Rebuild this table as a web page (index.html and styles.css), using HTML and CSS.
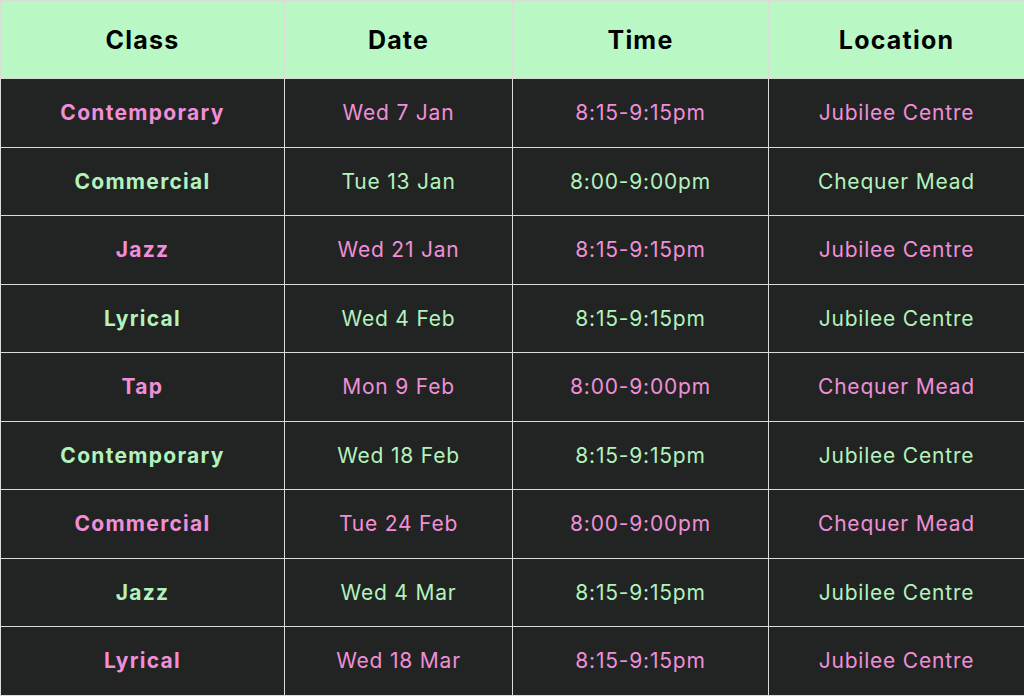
FILE: index.html
```html
<!DOCTYPE html>
<html>
<head>
<meta charset="utf-8">
<link rel="stylesheet" href="styles.css">
</head>
<body>
<table class="schedule">
  <colgroup>
    <col class="c1"><col class="c2"><col class="c3"><col class="c4">
  </colgroup>
  <thead>
    <tr><th>Class</th><th>Date</th><th>Time</th><th>Location</th></tr>
  </thead>
  <tbody>
    <tr class="pink"><td class="cls">Contemporary</td><td>Wed 7 Jan</td><td>8:15-9:15pm</td><td>Jubilee Centre</td></tr>
    <tr class="green"><td class="cls">Commercial</td><td>Tue 13 Jan</td><td>8:00-9:00pm</td><td>Chequer Mead</td></tr>
    <tr class="pink"><td class="cls">Jazz</td><td>Wed 21 Jan</td><td>8:15-9:15pm</td><td>Jubilee Centre</td></tr>
    <tr class="green"><td class="cls">Lyrical</td><td>Wed 4 Feb</td><td>8:15-9:15pm</td><td>Jubilee Centre</td></tr>
    <tr class="pink"><td class="cls">Tap</td><td>Mon 9 Feb</td><td>8:00-9:00pm</td><td>Chequer Mead</td></tr>
    <tr class="green"><td class="cls">Contemporary</td><td>Wed 18 Feb</td><td>8:15-9:15pm</td><td>Jubilee Centre</td></tr>
    <tr class="pink"><td class="cls">Commercial</td><td>Tue 24 Feb</td><td>8:00-9:00pm</td><td>Chequer Mead</td></tr>
    <tr class="green"><td class="cls">Jazz</td><td>Wed 4 Mar</td><td>8:15-9:15pm</td><td>Jubilee Centre</td></tr>
    <tr class="pink"><td class="cls">Lyrical</td><td>Wed 18 Mar</td><td>8:15-9:15pm</td><td>Jubilee Centre</td></tr>
  </tbody>
</table>
</body>
</html>
```

FILE: styles.css
```css
html, body {
  margin: 0;
  padding: 0;
  background: #ffffff;
}
.schedule {
  width: 1024px;
  border-collapse: collapse;
  table-layout: fixed;
  font-family: "Inter", "Liberation Sans", sans-serif;
}
.c1 { width: 284px; }
.c2 { width: 228px; }
.c3 { width: 256px; }
.c4 { width: 256px; }
.schedule th,
.schedule td {
  border: 1px solid #d9dcd9;
  text-align: center;
  padding: 0;
}
.schedule th {
  background: #b9f8c4;
  color: #000000;
  font-weight: 700;
  font-size: 25px;
  letter-spacing: 1.2px;
  height: 77px;
}
.schedule td {
  background: #212422;
  font-size: 21px;
  letter-spacing: 0.8px;
  font-weight: 400;
  height: 67.5px;
}
.schedule td.cls {
  font-weight: 700;
  letter-spacing: 1.3px;
}
.pink td { color: #f08fd8; }
.green td { color: #b3f2bd; }
```
